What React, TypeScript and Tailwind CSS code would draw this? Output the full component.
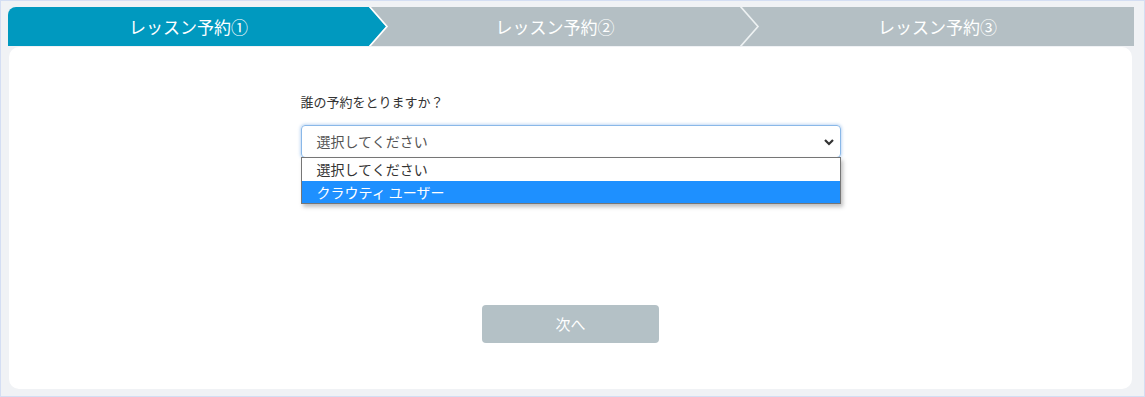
import React from "react";

const font = { fontFamily: '"Noto Sans CJK JP", "Noto Sans", sans-serif' };

export default function App() {
  return (
    <div
      className="w-[1145px] h-[397px] bg-[#f0f2f5] border border-[#d4def3] flex flex-col overflow-hidden"
      style={font}
    >
      {/* step bar */}
      <div className="mt-[6px] ml-[7px] mr-[10px] h-[39px] flex text-white text-[17px]">
        <div className="relative w-[361px] bg-[#0099bf] rounded-tl-[8px] flex items-center justify-center z-10">
          <span>レッスン予約①</span>
          <svg
            className="absolute top-0 left-[361px]"
            width="20"
            height="39"
            viewBox="0 0 20 39"
          >
            <polygon points="0,0 17,19.5 0,39" fill="#0099bf" />
            <polyline points="0.5,-0.5 18,19.5 0.5,39.5" fill="none" stroke="#ffffff" strokeWidth="1.6" />
          </svg>
        </div>
        <div className="relative w-[372px] bg-[#b4bfc4] flex items-center justify-center">
          <span>レッスン予約②</span>
          <svg
            className="absolute top-0 left-[371px] z-10"
            width="20"
            height="39"
            viewBox="0 0 20 39"
          >
            <polyline points="0.5,-0.5 18,19.5 0.5,39.5" fill="none" stroke="#eef2f3" strokeWidth="1.6" />
          </svg>
        </div>
        <div className="flex-1 bg-[#b4bfc4] flex items-center justify-center">
          <span>レッスン予約③</span>
        </div>
      </div>

      {/* card */}
      <div className="ml-[8px] mr-[12px] mt-[1px] h-[342px] bg-white rounded-[10px] flex flex-col items-center">
        <div className="w-[540px] flex flex-col">
          <div className="mt-[46px] text-[13px] text-[#333] leading-[18px]">誰の予約をとりますか？</div>
          <div className="relative mt-[14px]">
            <div className="h-[33px] rounded-[4px] border border-[#8ab8e8] shadow-[0_0_3px_1px_rgba(120,170,230,0.45)] flex items-center pl-[15px] pr-[4px] text-[14px] text-[#555]">
              <span className="flex-1">選択してください</span>
              <svg width="12" height="12" viewBox="0 0 12 12" className="mr-[1px]">
                <polyline points="2,4 6,8 10,4" fill="none" stroke="#333" strokeWidth="2.2" />
              </svg>
            </div>
            <div className="absolute left-0 right-0 top-[32px] border border-[#767676] bg-white shadow-[2px_3px_4px_rgba(0,0,0,0.25)] text-[14px] z-20">
              <div className="h-[23px] pl-[15px] flex items-center text-[#333]">選択してください</div>
              <div className="h-[22px] pl-[15px] flex items-center bg-[#1e90ff] text-white">クラウティ ユーザー</div>
            </div>
          </div>
        </div>
        <div className="mt-[147px] w-[177px] h-[38px] rounded-[4px] bg-[#b4c1c6] text-white text-[15px] flex items-center justify-center">
          次へ
        </div>
      </div>
    </div>
  );
}
